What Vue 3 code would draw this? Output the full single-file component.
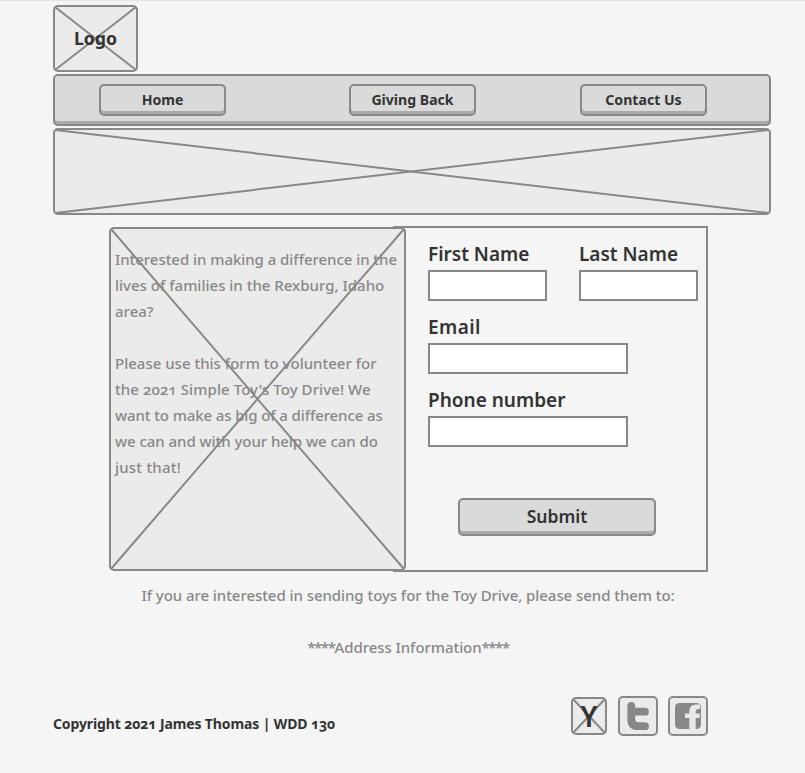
<script setup>
const links = ['Home', 'Giving Back', 'Contact Us']
const intro = [
  [
    { text: 'Interested in making a difference in the', tone: 'snug' },
    { text: 'lives of families in the Rexburg, Idaho', tone: '' },
    { text: 'area?', tone: '' },
  ],
  [
    { text: 'Please use this form to volunteer for', tone: '' },
    { text: "the 2021 Simple Toy's Toy Drive! We", tone: 'loose' },
    { text: 'want to make as big of a difference as', tone: 'tight' },
    { text: 'we can and with your help we can do', tone: 'snug' },
    { text: 'just that!', tone: 'wide' },
  ],
]
</script>

<template>
  <div class="page">
    <header>
      <div class="logo box">
        <svg class="cross" viewBox="0 0 85 67"><path d="M2 2 83 65M83 2 2 65" /></svg>
        <span>Logo</span>
      </div>
      <nav class="nav">
        <button v-for="link in links" :key="link" class="button">{{ link }}</button>
      </nav>
    </header>

    <div class="banner box">
      <svg class="cross" viewBox="0 0 718 87"><path d="M2 2 716 85M716 2 2 85" /></svg>
    </div>

    <main class="main">
      <section class="intro box">
        <svg class="cross" viewBox="0 0 297 344"><path d="M2 2 295 342M295 2 2 342" /></svg>
        <p v-for="(para, i) in intro" :key="i">
          <span v-for="line in para" :key="line.text" :class="line.tone">{{ line.text }}</span>
        </p>
      </section>
      <form class="form" @submit.prevent>
        <div class="names">
          <label>First Name<input type="text" /></label>
          <label>Last Name<input type="text" /></label>
        </div>
        <label class="email"><span>Email</span><input type="text" /></label>
        <label>Phone number<input type="text" /></label>
        <button class="button submit">Submit</button>
      </form>
    </main>

    <section class="address">
      <p>If you are interested in sending toys for the Toy Drive, please send them to:</p>
      <p><span class="stars">****</span>Address Information<span class="stars">****</span></p>
    </section>

    <footer class="footer">
      <span class="copyright">Copyright 2021 James Thomas | WDD 130</span>
      <div class="social">
        <div class="ylogo box">
          <svg class="cross" viewBox="0 0 36 38"><path d="M2 2 34 36M34 2 2 36" /></svg>
          <span>Y</span>
        </div>
        <div class="icon box">
          <svg viewBox="0 0 40 40">
            <path d="M13.300 10V23.500Q13.300 30.200 20 30.200H27M13.300 15.700H27" fill="none" stroke="#888" stroke-width="7.800" stroke-linecap="round" stroke-linejoin="round" />
          </svg>
        </div>
        <div class="icon box">
          <svg viewBox="0 0 40 40">
            <rect x="7" y="7" width="26" height="26" rx="4.500" fill="#888" />
            <path d="M21.300 33V22H17V17.500H21.300V15.500Q21.300 8.500 28 8.500H32V13H30Q27.700 13 27.700 15.500V17.500H32L31.500 22H27.700V33Z" fill="#e9e9e9" />
          </svg>
        </div>
      </div>
    </footer>
  </div>
</template>

<style>
body {
  margin: 0;
  background: #f5f5f5;
}
</style>

<style scoped>
* {
  box-sizing: border-box;
}
.page {
  height: 773px;
  padding: 4px 34px 0 53px;
  border-top: 1px solid #e4e4e4;
  background: #f5f5f5;
  color: #333;
  font-family: "Noto Sans", sans-serif;
  font-feature-settings: "onum";
}
.box {
  position: relative;
  background: #ebebeb;
  border: 2px solid #888;
  border-radius: 5px;
}
.cross {
  position: absolute;
  inset: -2px;
  fill: none;
  stroke: #888;
  stroke-width: 2;
}
.logo {
  width: 85px;
  height: 67px;
  text-align: center;
  font-size: 17.700px;
  font-weight: 700;
  line-height: 62px;
}
.logo span,
.ylogo span {
  position: relative;
}
.button {
  display: block;
  width: 127px;
  height: 32px;
  padding: 0;
  border: 2px solid #888;
  border-radius: 5px;
  background: #dadada;
  box-shadow: inset 0 -3px #aaa;
  color: #333;
  font: 700 14.100px/28px "Noto Sans", sans-serif;
  text-align: center;
}
.nav {
  display: grid;
  grid-template-columns: 250px 231px 127px;
  height: 52px;
  margin-top: 2px;
  padding: 8px 0 0 44px;
  border: 2px solid #888;
  border-radius: 5px;
  background: #dadada;
  box-shadow: inset 0 -3px #aaa;
}
.banner {
  height: 87px;
  margin-top: 2px;
}
.main {
  display: flex;
  margin: 11px 0 0 56px;
}
.intro {
  width: 297px;
  height: 344px;
  margin-top: 1px;
  padding: 17px 0 0 4px;
  z-index: 1;
}
.intro p {
  display: flex;
  flex-direction: column;
  margin: 0 0 26px;
}
.intro p,
.address {
  color: #888;
  font-size: 15px;
  font-weight: 500;
  line-height: 26px;
  white-space: nowrap;
}
.snug {
  letter-spacing: -0.050px;
}
.tight {
  letter-spacing: -0.115px;
}
.loose {
  letter-spacing: 0.080px;
}
.wide {
  letter-spacing: 0.200px;
}
.form {
  display: flex;
  flex-direction: column;
  width: 315px;
  height: 346px;
  margin-left: -13px;
  padding: 12px 0 0 35px;
  border: 2px solid #888;
  border-left: 0;
}
.names {
  display: flex;
  gap: 32px;
}
label {
  display: block;
  width: 200px;
  height: 73px;
  font-size: 19px;
  font-weight: 600;
  line-height: 29px;
}
.names label {
  width: 119px;
}
.email span {
  letter-spacing: 0.400px;
}
input {
  display: block;
  width: 100%;
  height: 31px;
  margin-top: 1px;
  border: 2px solid #888;
  border-radius: 0;
  background: #fff;
}
.submit {
  width: 198px;
  height: 38px;
  margin: 39px 0 0 30px;
  padding-bottom: 2px;
  font-size: 17.500px;
  font-weight: 600;
  line-height: 32px;
}
.address {
  width: 598px;
  margin: 10px 0 0 56px;
  text-align: center;
  letter-spacing: -0.060px;
}
.address p {
  margin: 0 0 26px;
}
.stars {
  letter-spacing: -1.450px;
}
.footer {
  display: flex;
  justify-content: space-between;
  width: 655px;
  margin-top: 36px;
}
.copyright {
  padding-top: 15px;
  font-size: 14px;
  font-weight: 700;
  line-height: 26px;
  letter-spacing: -0.120px;
}
.social {
  display: flex;
  gap: 10px;
}
.ylogo {
  width: 36px;
  height: 38px;
  margin: 1px 1px 0 0;
  text-align: center;
  font-size: 28px;
  font-weight: 600;
  line-height: 34px;
}
.icon {
  width: 40px;
  height: 40px;
}
.icon svg {
  position: absolute;
  inset: -2px;
}
</style>
